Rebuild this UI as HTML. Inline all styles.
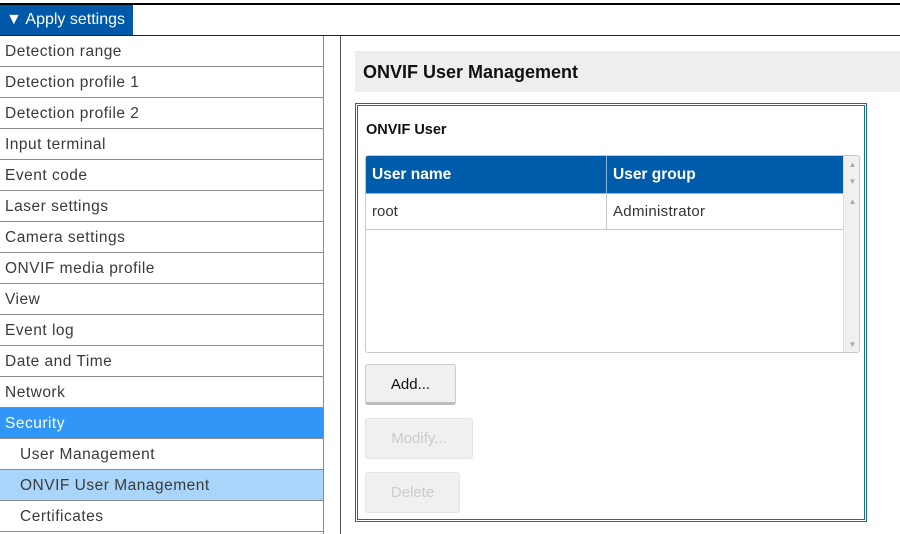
<!DOCTYPE html>
<html><head><style>
*{margin:0;padding:0;box-sizing:border-box}
body{width:900px;height:534px;background:#fff;font-family:"Liberation Sans","Noto Sans CJK JP",sans-serif;position:relative;overflow:hidden;color:#222}
.a{position:absolute}
.item{position:absolute;left:0;width:323px;height:31px;border-bottom:1px solid #8a8a8a;font-size:15.5px;line-height:31px;padding-left:5px;letter-spacing:0.5px;color:#3a3a3a}
.sub{padding-left:20px}
.btn{position:absolute;left:365px;border-radius:3px;font-size:15px;text-align:center;line-height:40px}
</style></head><body>
<div class="a" style="left:0;top:3px;width:900px;height:2px;background:#000"></div>
<div class="a" style="left:0;top:5px;width:133px;height:30px;background:#0058a8;color:#fff;font-size:16px;line-height:29px;padding-left:6px">▼ Apply settings</div>
<div class="a" style="left:0;top:35px;width:900px;height:1px;background:#222"></div>
<div class="a" style="left:323px;top:36px;width:1px;height:498px;background:#8a8a8a"></div>
<div class="a" style="left:340px;top:36px;width:1px;height:498px;background:#555"></div>

<div class="item" style="top:36px">Detection range</div>
<div class="item" style="top:67px">Detection profile 1</div>
<div class="item" style="top:98px">Detection profile 2</div>
<div class="item" style="top:129px">Input terminal</div>
<div class="item" style="top:160px">Event code</div>
<div class="item" style="top:191px">Laser settings</div>
<div class="item" style="top:222px">Camera settings</div>
<div class="item" style="top:253px">ONVIF media profile</div>
<div class="item" style="top:284px">View</div>
<div class="item" style="top:315px">Event log</div>
<div class="item" style="top:346px">Date and Time</div>
<div class="item" style="top:377px">Network</div>
<div class="item" style="top:408px;background:#3096f7;color:#fff">Security</div>
<div class="item sub" style="top:439px">User Management</div>
<div class="item sub" style="top:470px;background:#aad5fa">ONVIF User Management</div>
<div class="item sub" style="top:501px">Certificates</div>

<div class="a" style="left:355px;top:51px;width:545px;height:41px;background:#eeeeee;font-size:18px;font-weight:bold;line-height:42px;padding-left:8px;color:#111">ONVIF User Management</div>
<div class="a" style="left:355px;top:103px;width:512px;height:419px;border:3px double #1a6f84"></div>
<div class="a" style="left:366px;top:122px;font-size:14.5px;font-weight:bold;color:#111">ONVIF User</div>
<div class="a" style="left:365px;top:155px;width:495px;height:198px;border:1px solid #c8c8c8;border-radius:3px;overflow:hidden">
 <div class="a" style="left:0;top:0;width:477px;height:37px;background:#005bab;color:#fff;font-weight:bold;font-size:15.5px;line-height:37px">
  <span class="a" style="left:6px">User name</span>
  <div class="a" style="left:240px;top:0;width:1px;height:37px;background:#8fb4da"></div>
  <span class="a" style="left:247px">User group</span>
 </div>
 <div class="a" style="left:477px;top:0;width:17px;height:197px;background:#f0f0f0;border-left:1px solid #ddd;color:#aaa;font-size:8px;text-align:center">
  <div class="a" style="top:4px;width:17px">▲</div><div class="a" style="top:21px;width:17px">▼</div>
  <div class="a" style="top:41px;width:17px">▲</div><div class="a" style="top:184px;width:17px">▼</div>
 </div>
 <div class="a" style="left:0;top:37px;width:477px;height:37px;border-top:1px solid #aac;border-bottom:1px solid #c8c8c8;font-size:15px;line-height:36px;color:#333">
  <span class="a" style="left:6px">root</span>
  <div class="a" style="left:240px;top:0;width:1px;height:36px;background:#c8c8c8"></div>
  <span class="a" style="left:247px;letter-spacing:0.3px">Administrator</span>
 </div>
</div>
<div class="btn" style="top:364px;width:91px;height:41px;background:#f0f0f0;border:1px solid #ccc;border-bottom:3px solid #bbb;color:#111">Add...</div>
<div class="btn" style="top:418px;width:108px;height:41px;background:#f0f0f0;border:1px solid #e4e4e4;color:#ccc">Modify...</div>
<div class="btn" style="top:472px;width:95px;height:41px;background:#f0f0f0;border:1px solid #e4e4e4;color:#ccc">Delete</div>
</body></html>
